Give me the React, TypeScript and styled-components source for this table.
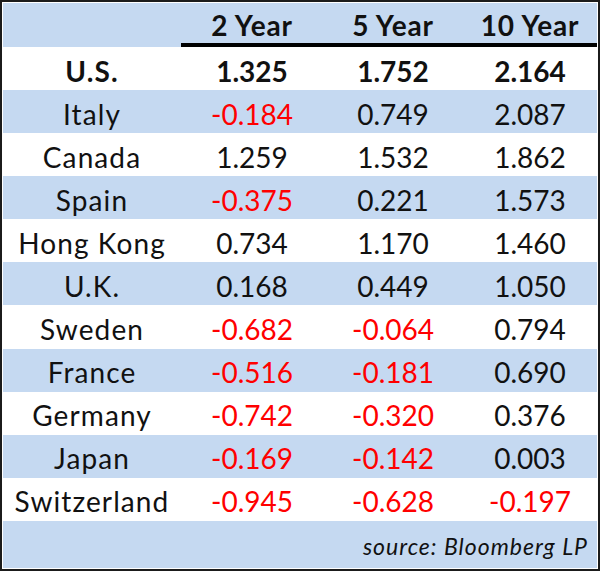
import styled, { createGlobalStyle } from "styled-components";

// ── colours ────────────────────────────────────────────────────────────────
const BLUE = "#C5D9F1";
const WHITE = "#FFFFFF";
const INK = "#111111";
const RED = "#FF0000";
const FRAME = "#1B1B1B";

const COLS = "178px 142px 140px 1fr";

type Row = { country: string; values: number[]; bold?: boolean };

const ROWS: Row[] = [
  { country: "U.S.", values: [1.325, 1.752, 2.164], bold: true },
  { country: "Italy", values: [-0.184, 0.749, 2.087] },
  { country: "Canada", values: [1.259, 1.532, 1.862] },
  { country: "Spain", values: [-0.375, 0.221, 1.573] },
  { country: "Hong Kong", values: [0.734, 1.17, 1.46] },
  { country: "U.K.", values: [0.168, 0.449, 1.05] },
  { country: "Sweden", values: [-0.682, -0.064, 0.794] },
  { country: "France", values: [-0.516, -0.181, 0.69] },
  { country: "Germany", values: [-0.742, -0.32, 0.376] },
  { country: "Japan", values: [-0.169, -0.142, 0.003] },
  { country: "Switzerland", values: [-0.945, -0.628, -0.197] },
];

const HEADERS = ["2 Year", "5 Year", "10 Year"];

const Global = createGlobalStyle`
  html, body { margin: 0; padding: 0; background: ${WHITE}; }
  body { font-family: "Lato", "Open Sans", sans-serif; }
`;

// ── styled components ────────────────────────────────────────────────────────
const Frame = styled.div`
  box-sizing: border-box;
  width: 600px;
  height: 571px;
  border: 2px solid ${FRAME};
  padding: 1px;
  background: ${WHITE};
  display: flex;
  flex-direction: column;
`;

const HeadRow = styled.div`
  display: grid;
  grid-template-columns: ${COLS};
  height: 44px;
  flex-shrink: 0;
  background: ${BLUE};
`;

const HeadCell = styled.div<{ $rule?: boolean }>`
  display: flex;
  align-items: center;
  justify-content: center;
  padding-top: 3px;
  border-bottom: 4px solid ${p => (p.$rule ? "#000" : "transparent")};
  font-size: 28px;
  font-weight: 700;
  letter-spacing: 0.8px;
  color: ${INK};
`;

const BodyRow = styled.div<{ $blue?: boolean }>`
  flex: 1;
  display: grid;
  grid-template-columns: ${COLS};
  background: ${p => (p.$blue ? BLUE : WHITE)};
`;

const Cell = styled.div<{ $bold?: boolean; $neg?: boolean; $name?: boolean }>`
  display: flex;
  align-items: center;
  justify-content: center;
  padding-top: 4px;
  font-size: 28px;
  letter-spacing: ${p => (p.$name ? "1.1px" : "0")};
  font-weight: ${p => (p.$bold ? 700 : 400)};
  color: ${p => (p.$neg ? RED : INK)};
`;

const SourceRow = styled.div`
  flex: 1;
  display: flex;
  align-items: center;
  justify-content: flex-end;
  padding: 4px 9px 0 0;
  background: ${BLUE};
  font-size: 23px;
  font-style: italic;
  letter-spacing: 1px;
  color: ${INK};
`;

// ── component ────────────────────────────────────────────────────────────────
export default function App() {
  return (
    <>
      <Global />
      <Frame>
        <HeadRow>
          <HeadCell />
          {HEADERS.map(h => (
            <HeadCell key={h} $rule>
              {h}
            </HeadCell>
          ))}
        </HeadRow>

        {ROWS.map((r, i) => (
          <BodyRow key={r.country} $blue={i % 2 === 1}>
            <Cell $name $bold={r.bold}>
              {r.country}
            </Cell>
            {r.values.map((v, j) => (
              <Cell key={j} $bold={r.bold} $neg={v < 0}>
                {v < 0 ? "-" : ""}
                {Math.abs(v).toFixed(3)}
              </Cell>
            ))}
          </BodyRow>
        ))}

        <SourceRow>source: Bloomberg LP</SourceRow>
      </Frame>
    </>
  );
}
